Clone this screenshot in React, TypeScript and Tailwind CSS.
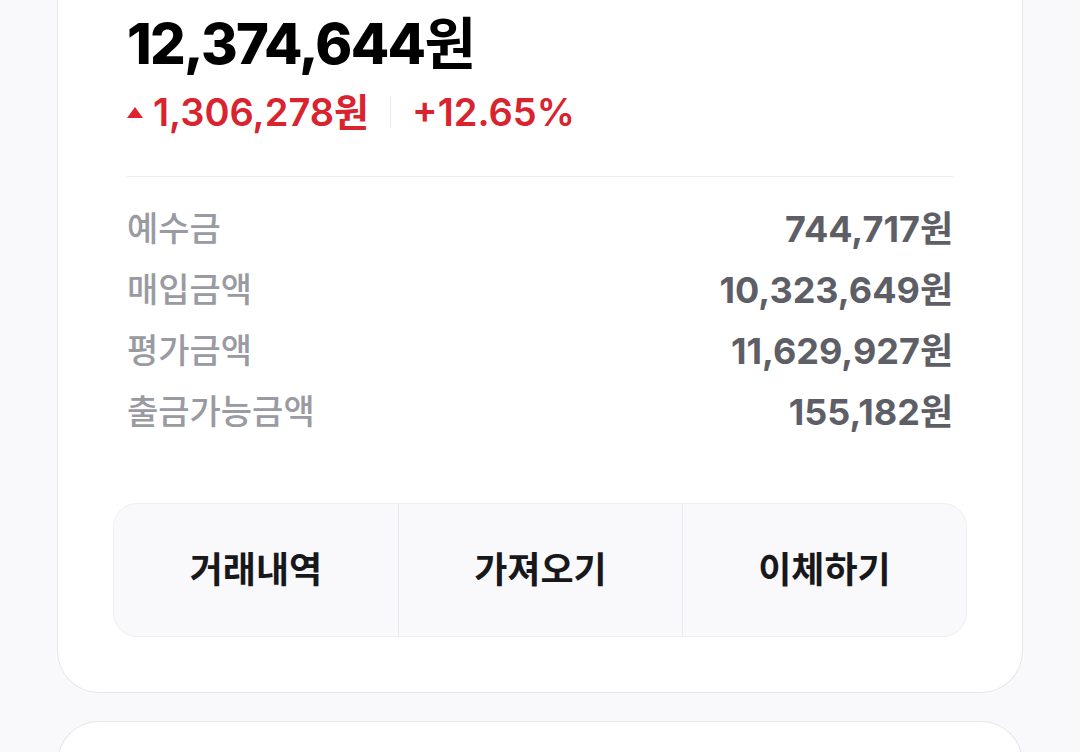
const font = { fontFamily: 'Inter, "Noto Sans CJK KR", sans-serif' };

const rows = [
  { label: "예수금", value: "744,717" },
  { label: "매입금액", value: "10,323,649" },
  { label: "평가금액", value: "11,629,927" },
  { label: "출금가능금액", value: "155,182" },
];

const actions = ["거래내역", "가져오기", "이체하기"];

function Won({ className = "" }: { className?: string }) {
  return <span className={className}>원</span>;
}

export default function App() {
  return (
    <div
      className="h-[752px] overflow-hidden bg-[#f9f9fb] px-[57px]"
      style={font}
    >
      <div className="rounded-b-[42px] border border-t-0 border-[#e6e6ea] bg-white px-[55px] pb-[55px]">
        <div className="px-[14px]">
          <div className="pt-[10px] text-[56px] font-extrabold leading-[68px] tracking-[-0.03em] text-black">
            12,374,644
            <Won className="font-semibold tracking-normal" />
          </div>
          <div className="mt-[14px] flex h-[40px] items-center text-[38px] font-semibold leading-none text-[#d9232f]">
            <svg width="16" height="11" viewBox="0 0 16 11" className="mr-[10px] mt-[1px]">
              <path d="M8 0 L16 11 L0 11 Z" fill="#e02432" />
            </svg>
            <span>
              1,306,278
              <Won />
            </span>
            <span className="mx-[21px] h-[32px] w-px bg-[#ececef]" />
            <span>+12.65%</span>
          </div>
          <div className="mt-[44px] h-px bg-[#ededf0]" />
          <div className="pt-[21px]">
            {rows.map((r) => (
              <div
                key={r.label}
                className="flex h-[61px] items-center justify-between leading-none"
              >
                <span className="text-[34px] font-medium text-[#9a9aa3]">{r.label}</span>
                <span className="text-[36px] font-bold text-[#5e5e66]">
                  {r.value}
                  <Won />
                </span>
              </div>
            ))}
          </div>
        </div>
        <div className="mt-[61px] grid h-[134px] grid-cols-3 overflow-hidden rounded-[24px] border border-[#efeff2] bg-[#f9f9fb]">
          {actions.map((a, i) => (
            <div
              key={a}
              className={`flex items-center justify-center text-[36px] font-bold text-[#18181b] ${
                i > 0 ? "border-l border-[#ebebef]" : ""
              }`}
            >
              {a}
            </div>
          ))}
        </div>
      </div>
      <div className="mt-[28px] h-[120px] rounded-t-[42px] border border-b-0 border-[#e6e6ea] bg-white" />
    </div>
  );
}
